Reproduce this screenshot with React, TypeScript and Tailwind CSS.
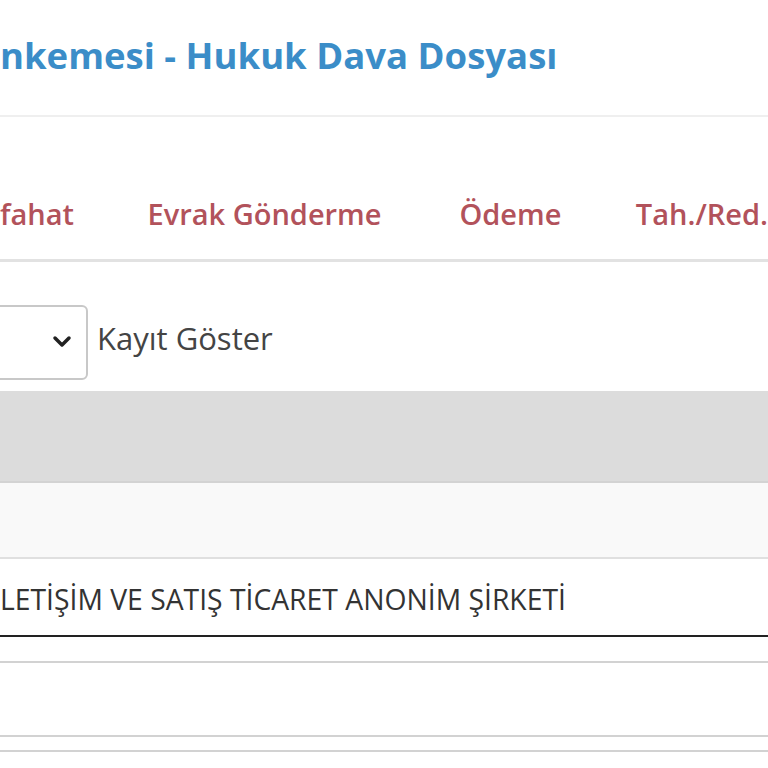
export default function App() {
  return (
    <div className="w-[768px] h-[768px] overflow-hidden bg-white" style={{ fontFamily: '"Open Sans", "Noto Sans", sans-serif' }}>
      <div className="h-[115px] flex items-center">
        <h1 className="text-[36.5px] font-bold text-[#3b8dc8] whitespace-nowrap leading-none -mt-[4px]">nkemesi - Hukuk Dava Dosyası</h1>
      </div>
      <div className="h-[2px] bg-[#efefef]" />
      <div className="h-[142px] flex items-end pb-[31px] text-[29px] font-semibold text-[#b2525b] whitespace-nowrap leading-none">
        <span className="w-[148px]">fahat</span>
        <span className="w-[313px]">Evrak Gönderme</span>
        <span className="w-[177px]">Ödeme</span>
        <span>Tah./Red.</span>
      </div>
      <div className="h-[3px] bg-[#e2e2e2]" />
      <div className="h-[129px] flex items-center">
        <div className="w-[98px] h-[75px] border-2 border-[#c8c8c8] rounded-[6px] -ml-[10px] flex items-center justify-end pr-[14px] mt-[31px] shrink-0">
          <svg width="20" height="14" viewBox="0 0 20 14"><path d="M3 3 L10 10 L17 3" fill="none" stroke="#222" strokeWidth="3.5" strokeLinecap="round" strokeLinejoin="round" /></svg>
        </div>
        <span className="ml-[9px] text-[31px] text-[#444] mt-[24px]">Kayıt Göster</span>
      </div>
      <div className="h-[92px] bg-[#dcdcdc] border-b-2 border-[#d3d3d3]" />
      <div className="h-[76px] bg-[#f9f9f9] border-b-2 border-[#e0e0e0]" />
      <div className="h-[78px] flex items-center border-b-2 border-[#222]">
        <span className="text-[28.3px] text-[#333] whitespace-nowrap mt-[4px]">LETİŞİM VE SATIŞ TİCARET ANONİM ŞİRKETİ</span>
      </div>
      <div className="h-[24px]" />
      <div className="h-[2px] bg-[#d2d2d2]" />
      <div className="h-[72px]" />
      <div className="h-[2px] bg-[#d2d2d2]" />
      <div className="h-[13px]" />
      <div className="h-[2px] bg-[#d2d2d2]" />
    </div>
  );
}
